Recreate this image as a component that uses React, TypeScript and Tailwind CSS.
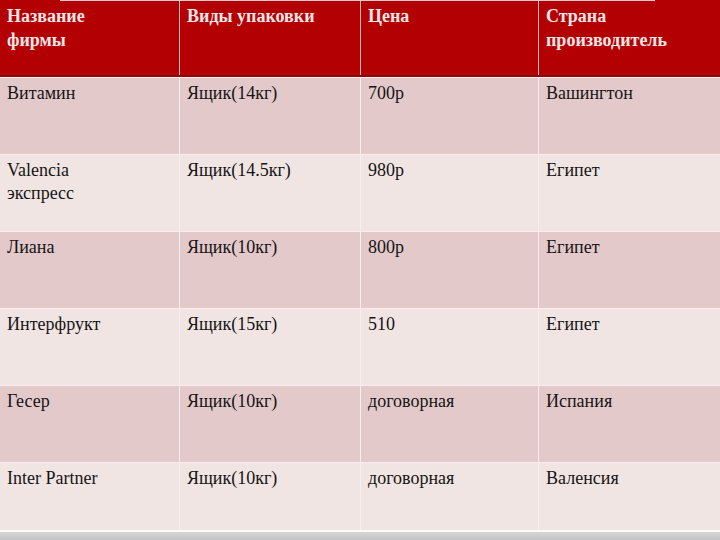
const headers = [["Название", "фирмы"], ["Виды упаковки"], ["Цена"], ["Страна", "производитель"]];

const rows = [
  [["Витамин"], ["Ящик(14кг)"], ["700р"], ["Вашингтон"]],
  [["Valencia", "экспресс"], ["Ящик(14.5кг)"], ["980р"], ["Египет"]],
  [["Лиана"], ["Ящик(10кг)"], ["800р"], ["Египет"]],
  [["Интерфрукт"], ["Ящик(15кг)"], ["510"], ["Египет"]],
  [["Гесер"], ["Ящик(10кг)"], ["договорная"], ["Испания"]],
  [["Inter Partner"], ["Ящик(10кг)"], ["договорная"], ["Валенсия"]],
];

const widths = ["w-[180px]", "w-[181px]", "w-[178px]", "w-[181px]"];

export default function App() {
  return (
    <div className="w-[720px] h-[540px] bg-white overflow-hidden flex flex-col font-['Liberation_Serif','Times_New_Roman',serif]">
      {/* header */}
      <div className="h-[77px] shrink-0 flex flex-col bg-[#b20003] border-b-2 border-[#8c0b0e]">
        <div className="h-px ml-[60px] w-[595px] bg-[#e9c9c9]" />
        <div className="flex flex-1">
          {headers.map((h, i) => (
            <div
              key={i}
              className={`${widths[i]} shrink-0 pl-[7px] pr-2 pt-[3px] text-[18px] leading-[24px] font-bold text-[#f6e6e6] ${
                i < 3 ? "border-r border-[#e8bfc0]" : ""
              }`}
            >
              {h.map((line) => (
                <div key={line}>{line}</div>
              ))}
            </div>
          ))}
        </div>
      </div>

      {rows.map((r, ri) => (
        <div
          key={ri}
          className={`${ri === rows.length - 1 ? "h-[68px]" : "h-[77px]"} shrink-0 flex border-t border-[#fbefee] ${
            ri % 2 === 0 ? "bg-[#e4c9cb]" : "bg-[#f1e5e4]"
          }`}
        >
          {r.map((c, ci) => (
            <div
              key={ci}
              className={`${widths[ci]} shrink-0 pl-[7px] pr-3 pt-[4px] text-[18px] leading-[23px] text-[#151515] ${
                ci < 3 ? "border-r border-[#fbefee]" : ""
              }`}
            >
              {c.map((line) => (
                <div key={line}>{line}</div>
              ))}
            </div>
          ))}
        </div>
      ))}

      <div className="flex-1 border-t-2 border-[#fafafa] bg-gradient-to-b from-[#d6d6d6] to-[#c4c4c4]" />
    </div>
  );
}
